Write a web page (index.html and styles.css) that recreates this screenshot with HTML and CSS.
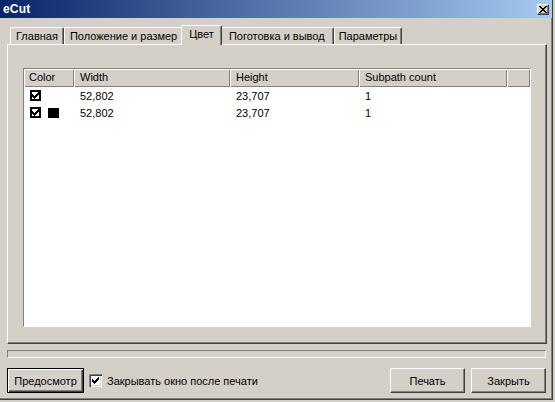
FILE: index.html
```html
<!DOCTYPE html>
<html>
<head>
<meta charset="utf-8">
<link rel="stylesheet" href="styles.css">
</head>
<body>
<div class="window">
  <div class="titlebar">
    <span class="title">eCut</span>
    <span class="close"><svg width="8" height="7" viewBox="0 0 8 7"><path d="M0 0h2v1H0zM6 0h2v1H6zM1 1h2v1H1zM5 1h2v1H5zM2 2h4v1H2zM3 3h2v1H3zM2 4h4v1H2zM1 5h2v1H1zM5 5h2v1H5zM0 6h2v1H0zM6 6h2v1H6z" fill="#000"/></svg></span>
  </div>
  <div class="content">
    <div class="tabs">
      <div class="tab">Главная</div>
      <div class="tab">Положение и размер</div>
      <div class="tab active">Цвет</div>
      <div class="tab wide">Поготовка и вывод</div>
      <div class="tab narrow">Параметры</div>
    </div>
    <div class="panel">
      <div class="list">
        <div class="list-head">
          <div class="th col-color">Color</div>
          <div class="th col-width">Width</div>
          <div class="th col-height">Height</div>
          <div class="th col-count">Subpath count</div>
          <div class="th col-rest"></div>
        </div>
        <div class="row">
          <div class="td col-color">
            <span class="lv-check"><svg width="7" height="7" viewBox="0 0 7 7"><path d="M0 2h1v3H0zM1 3h1v3H1zM2 4h1v3H2zM3 3h1v3H3zM4 2h1v3H4zM5 1h1v3H5zM6 0h1v3H6z" fill="#000"/></svg></span>
          </div>
          <div class="td col-width">52,802</div>
          <div class="td col-height">23,707</div>
          <div class="td col-count">1</div>
        </div>
        <div class="row">
          <div class="td col-color">
            <span class="lv-check"><svg width="7" height="7" viewBox="0 0 7 7"><path d="M0 2h1v3H0zM1 3h1v3H1zM2 4h1v3H2zM3 3h1v3H3zM4 2h1v3H4zM5 1h1v3H5zM6 0h1v3H6z" fill="#000"/></svg></span>
            <span class="swatch"></span>
          </div>
          <div class="td col-width">52,802</div>
          <div class="td col-height">23,707</div>
          <div class="td col-count">1</div>
        </div>
      </div>
    </div>
    <div class="progress"></div>
    <div class="footer">
      <button class="btn default">Предосмотр</button>
      <label class="check">
        <span class="box"><svg width="13" height="13" viewBox="0 0 13 13"><path d="M3 5h1v3H3zM4 6h1v3H4zM5 7h1v3H5zM6 6h1v3H6zM7 5h1v3H7zM8 4h1v3H8zM9 3h1v3H9z" fill="#000"/></svg></span>
        <span>Закрывать окно после печати</span>
      </label>
      <span class="spacer"></span>
      <button class="btn">Печать</button>
      <button class="btn">Закрыть</button>
    </div>
  </div>
</div>
</body>
</html>
```
FILE: styles.css
```css
* { box-sizing: border-box; }
html, body { margin: 0; padding: 0; }
body {
  background: #d4d0c8;
  font-family: "Liberation Sans", Arial, sans-serif;
  font-size: 11px;
  color: #000;
}
.window {
  width: 553px;
  height: 400px;
  background: #d4d0c8;
  border-right: 1px solid #404040;
  border-bottom: 1px solid #404040;
  box-shadow: inset -1px -1px #808080;
  display: flex;
  flex-direction: column;
}
.titlebar {
  height: 18px;
  flex: none;
  background: linear-gradient(to right, #0a246a, #a6caf0);
  display: flex;
  align-items: center;
  justify-content: space-between;
  padding: 0 2px 0 3px;
  color: #fff;
  font-weight: bold;
}
.title { font-size: 12px; letter-spacing: 0.2px; }
.close {
  width: 12px;
  height: 11px;
  background: #d4d0c8;
  border: 1px solid;
  border-color: #fff #404040 #404040 #fff;
  box-shadow: inset -1px -1px #808080;
  display: flex;
  align-items: center;
  justify-content: center;
  margin-right: 1px;
}
.close svg { display: block; }
.content {
  flex: 1;
  padding-left: 7px;
  display: flex;
  flex-direction: column;
}
.tabs {
  height: 26px;
  flex: none;
  display: flex;
  align-items: flex-end;
  padding-left: 3px;
}
.tab {
  height: 17px;
  padding: 0 5px;
  line-height: 17px;
  border-top: 1px solid #fff;
  border-left: 1px solid #fff;
  border-right: 1px solid #404040;
  box-shadow: inset -1px 0 #808080;
  border-radius: 2px 2px 0 0;
  white-space: nowrap;
}
.tab.wide { padding: 0 8px; }
.tab.narrow { padding: 0 4px; }
.tab.active {
  height: 20px;
  line-height: 16px;
  margin: 0 -2px -1px;
  padding: 0 7px;
  position: relative;
  z-index: 1;
  background: #d4d0c8;
}
.panel {
  width: 540px;
  height: 300px;
  flex: none;
  border-top: 1px solid #fff;
  border-left: 1px solid #fff;
  border-right: 1px solid #404040;
  border-bottom: 1px solid #404040;
  box-shadow: inset -1px -1px #808080;
  padding: 23px 0 0 15px;
}
.list {
  width: 508px;
  height: 259px;
  background: #fff;
  border: 1px solid;
  border-color: #808080 #fff #fff #808080;
}
.list-head {
  display: flex;
  height: 18px;
  background: #d4d0c8;
}
.th {
  height: 18px;
  line-height: 17px;
  padding-left: 5px;
  box-shadow: inset 1px 1px #fff, inset -1px -1px #808080;
  white-space: nowrap;
}
.col-color { width: 50px; }
.col-width { width: 156px; padding-left: 6px; }
.col-height { width: 129px; padding-left: 6px; }
.col-count { width: 148px; padding-left: 6px; }
.col-rest { flex: 1; }
.row {
  display: flex;
  height: 17px;
  line-height: 18px;
}
.td {
  height: 17px;
  white-space: nowrap;
}
.td.col-color {
  display: flex;
  align-items: center;
  gap: 7px;
  padding-left: 6px;
}
.lv-check {
  width: 11px;
  height: 11px;
  border: 2px solid #000;
  background: #fff;
  display: flex;
  align-items: center;
  justify-content: center;
}
.lv-check svg { display: block; }
.swatch {
  width: 11px;
  height: 10px;
  background: #000;
}
.progress {
  width: 539px;
  height: 8px;
  flex: none;
  margin-top: 6px;
  border: 1px solid;
  border-color: #808080 #fff #fff #808080;
}
.footer {
  margin-top: 10px;
  display: flex;
  align-items: center;
  height: 25px;
  width: 539px;
}
.btn {
  font-family: inherit;
  font-size: 11px;
  color: #000;
  height: 25px;
  width: 75px;
  padding: 0;
  margin: 0;
  background: #d4d0c8;
  border: 1px solid;
  border-color: #fff #404040 #404040 #fff;
  box-shadow: inset -1px -1px #808080;
  border-radius: 0;
}
.btn.default {
  width: 77px;
  border: 1px solid #000;
  box-shadow: inset 1px 1px #fff, inset -1px -1px #404040, inset -2px -2px #808080;
}
.btn + .btn { margin-left: 6px; }
.check {
  display: flex;
  align-items: center;
  margin-left: 5px;
  gap: 5px;
  white-space: nowrap;
}
.box {
  width: 13px;
  height: 13px;
  background: #fff;
  box-shadow: inset 1px 1px #808080, inset 2px 2px #404040, inset -1px -1px #fff, inset -2px -2px #d4d0c8;
}
.box svg { display: block; }
.spacer { flex: 1; }
```
